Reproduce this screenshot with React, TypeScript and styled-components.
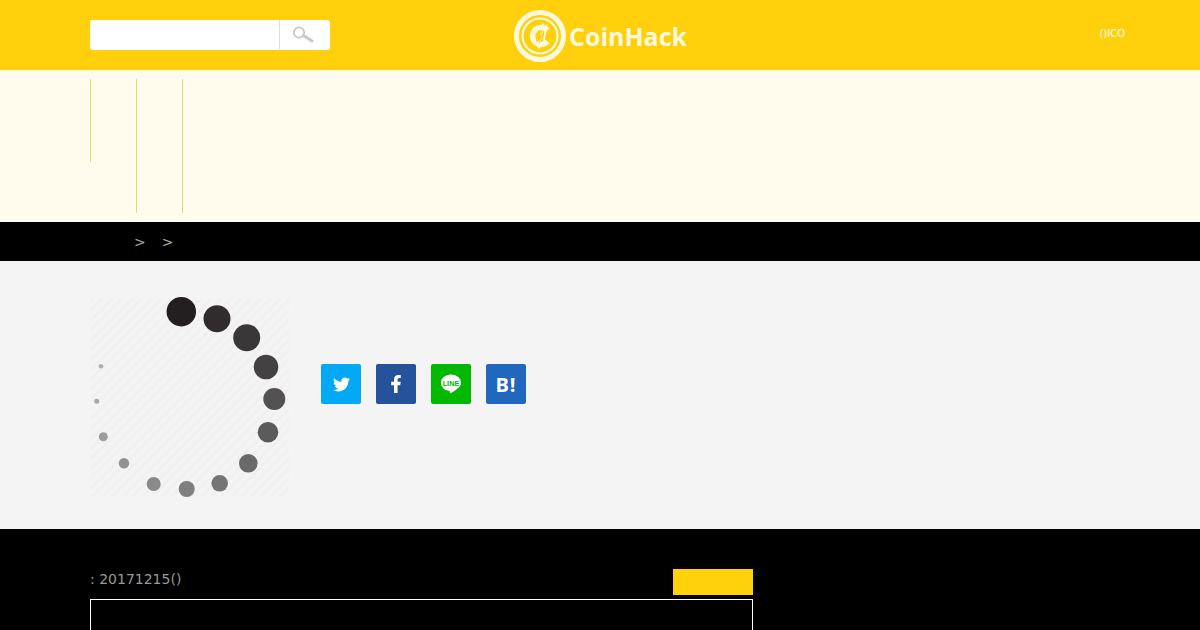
import React from "react";
import styled, { createGlobalStyle } from "styled-components";
import { FaTwitter, FaFacebookF } from "react-icons/fa";

const GlobalStyle = createGlobalStyle`
  html, body {
    margin: 0;
    padding: 0;
    height: 630px;
    overflow: hidden;
    background: #000;
    font-family: "DejaVu Sans", sans-serif;
  }
`;

const Wrap = styled.div`
  width: 1200px;
  height: 630px;
  overflow: hidden;
`;

const Header = styled.header`
  height: 70px;
  box-sizing: border-box;
  padding: 0 90px;
  background: #ffd00b;
  display: grid;
  grid-template-columns: 1fr auto 1fr;
  align-items: center;
`;

const Search = styled.div`
  width: 240px;
  height: 30px;
  display: flex;
  background: #fff;
  border-radius: 3px;
`;

const SearchInput = styled.div`
  flex: 1;
  border-right: 1px solid #ddd;
`;

const SearchButton = styled.div`
  width: 50px;
  padding-right: 4px;
  box-sizing: border-box;
  display: flex;
  align-items: center;
  justify-content: center;
`;

const Logo = styled.div`
  display: flex;
  align-items: center;
  gap: 3px;
  margin: 2px 0 0 1px;
`;

const LogoText = styled.span`
  font-family: "Open Sans", sans-serif;
  font-weight: 700;
  font-size: 25px;
  color: #fff9dc;
`;

const TopLink = styled.a`
  justify-self: end;
  font-size: 10px;
  color: #fff;
  margin: -3px -15px 0 0;
`;

const Nav = styled.nav`
  height: 152px;
  box-sizing: border-box;
  padding: 9px 90px 9px;
  background: #fffced;
  display: flex;
  align-items: flex-start;
`;

const NavItem = styled.div<{ $height: number }>`
  width: 46px;
  height: ${(p) => p.$height}px;
  box-sizing: border-box;
  border-left: 1px solid #dfdf70;
`;

const Breadcrumb = styled.div`
  height: 39px;
  box-sizing: border-box;
  padding: 0 0 0 134px;
  background: #000;
  color: #aaa;
  font-size: 14px;
  display: flex;
  align-items: center;
  gap: 16px;
`;

const Article = styled.section`
  height: 268px;
  box-sizing: border-box;
  padding: 37px 90px 0 91px;
  background: #f4f4f4;
  display: flex;
  align-items: flex-start;
`;

const Share = styled.div`
  display: flex;
  gap: 15px;
  margin: 66px 0 0 32px;
`;

const ShareButton = styled.a<{ $bg: string }>`
  width: 40px;
  height: 40px;
  border-radius: 2px;
  background: ${(p) => p.$bg};
  color: #fff;
  display: flex;
  align-items: center;
  justify-content: center;
`;

const Hatena = styled.span`
  font-family: "Open Sans", sans-serif;
  font-weight: 700;
  font-size: 20px;
  letter-spacing: 1px;
`;

const Footer = styled.footer`
  height: 101px;
  box-sizing: border-box;
  padding: 40px 0 0 90px;
  background: #000;
`;

const MetaRow = styled.div`
  width: 663px;
  height: 26px;
  margin-bottom: 4px;
  display: flex;
  justify-content: space-between;
  align-items: flex-start;
`;

const DateText = styled.span`
  font-size: 14px;
  line-height: 20px;
  color: #999;
`;

const MoreButton = styled.div`
  width: 80px;
  height: 26px;
  background: #ffd00b;
`;

const Box = styled.div`
  width: 663px;
  height: 80px;
  box-sizing: border-box;
  border: 1px solid #fff;
`;

// spinner dots: x, y, radius, fill
const dots: [number, number, number, string][] = [
  [90.3, 13.7, 14.7, "#231f20"],
  [126, 20.7, 13.5, "#302c2d"],
  [155.7, 39.7, 13.5, "#3a3738"],
  [175, 69, 12.3, "#444142"],
  [183.3, 101, 11, "#535152"],
  [177, 134.3, 10.3, "#5c5b5c"],
  [157.3, 165.3, 9.3, "#6a696a"],
  [128.7, 185.3, 8.3, "#767576"],
  [95.7, 191, 8, "#807f80"],
  [62.7, 186, 7, "#8b8a8b"],
  [33, 165.3, 5.2, "#939293"],
  [12.3, 138.7, 4.5, "#9e9d9e"],
  [5.7, 103.3, 2.5, "#a8a7a8"],
  [10, 68.3, 2.3, "#b0afb0"],
];

const Spinner = () => (
  <svg
    width="198"
    height="198"
    viewBox="0 0 198 198"
    style={{ flex: "none", overflow: "visible" }}
  >
    <defs>
      <pattern
        id="stripes"
        width="7"
        height="7"
        patternUnits="userSpaceOnUse"
        patternTransform="rotate(45)"
      >
        <rect width="3" height="7" fill="#f0f0f0" />
      </pattern>
    </defs>
    <rect y="1" width="198" height="197" fill="url(#stripes)" />
    {dots.map(([x, y, r, fill]) => (
      <circle key={`${x}-${y}`} cx={x} cy={y} r={r} fill={fill} />
    ))}
  </svg>
);

const CoinMark = () => (
  <svg width="52" height="52" viewBox="0 0 52 52">
    <circle cx="26" cy="26" r="23.5" fill="none" stroke="#fff9dc" strokeWidth="5" />
    <circle cx="26" cy="26" r="17.5" fill="none" stroke="#fff9dc" strokeWidth="2.2" />
    <path
      d="M33.5 20.5a8.500 8.500 0 1 0 0 11"
      fill="none"
      stroke="#fff9dc"
      strokeWidth="5.500"
    />
    <path d="M29 13.500 25 38.500M32.500 14.500 29 37" stroke="#fff9dc" strokeWidth="1.800" />
    <path d="M27.500 20 25.500 33M24.500 20 22.500 32" stroke="#ffd00b" strokeWidth="1" />
  </svg>
);

const SearchIcon = () => (
  <svg width="22" height="18" viewBox="0 0 22 18">
    <circle cx="7" cy="6.500" r="5.200" fill="none" stroke="#c9c9c9" strokeWidth="1.800" />
    <path d="M11.500 9.500 20 15" stroke="#c9c9c9" strokeWidth="3" strokeLinecap="round" />
  </svg>
);

const LineIcon = () => (
  <svg width="22" height="22" viewBox="0 0 24 24">
    <path
      d="M12 1.500C5.600 1.500 1 5.500 1 10.600c0 4.600 3.800 8.200 9 8.900.8.2.9.6.7 1.500-.1.7-.2 1.600.6 1.200 1.400-.7 6-3.600 8.600-5.900C21.800 14.600 23 12.800 23 10.600 23 5.500 18.400 1.500 12 1.500Z"
      fill="#fff"
    />
    <text
      x="12"
      y="13.800"
      textAnchor="middle"
      fontFamily="Liberation Sans, sans-serif"
      fontWeight="700"
      fontSize="8"
      fill="#00b900"
    >
      LINE
    </text>
  </svg>
);

const App: React.FC = () => (
  <Wrap>
    <GlobalStyle />
    <Header>
      <Search>
        <SearchInput />
        <SearchButton>
          <SearchIcon />
        </SearchButton>
      </Search>
      <Logo>
        <CoinMark />
        <LogoText>CoinHack</LogoText>
      </Logo>
      <TopLink>()ICO</TopLink>
    </Header>
    <Nav>
      <NavItem $height={83} />
      <NavItem $height={134} />
      <NavItem $height={134} />
    </Nav>
    <Breadcrumb>
      <span>&gt;</span>
      <span>&gt;</span>
    </Breadcrumb>
    <Article>
      <Spinner />
      <Share>
        <ShareButton $bg="#03a9f4">
          <FaTwitter size={17} />
        </ShareButton>
        <ShareButton $bg="#26529c">
          <FaFacebookF size={18} />
        </ShareButton>
        <ShareButton $bg="#00b900">
          <LineIcon />
        </ShareButton>
        <ShareButton $bg="#2068bd">
          <Hatena>B!</Hatena>
        </ShareButton>
      </Share>
    </Article>
    <Footer>
      <MetaRow>
        <DateText>: 20171215()</DateText>
        <MoreButton />
      </MetaRow>
      <Box />
    </Footer>
  </Wrap>
);

export default App;
